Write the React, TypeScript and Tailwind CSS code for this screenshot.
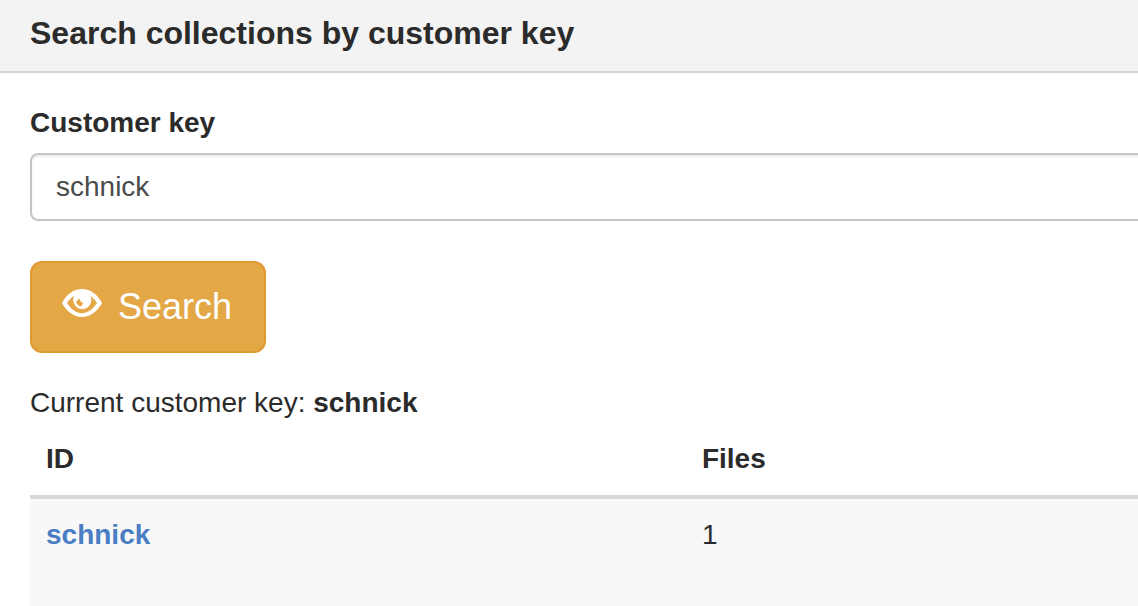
import { useState } from "react";
import type { FormEvent } from "react";

type Collection = { id: string; files: number };

const collections: Collection[] = [{ id: "schnick", files: 1 }];

function EyeIcon() {
  return (
    <svg viewBox="0 0 40 28" className="mb-2 h-7 w-10 shrink-0" fill="currentColor" aria-hidden="true">
      <path
        fillRule="evenodd"
        d="M0.3 14.8Q0 14 0.3 13.2C5 5.400 11.500 0 20 0S35 5.400 39.700 13.200Q40 14 39.700 14.800C35 22.600 28.500 28 20 28S5 22.600 0.300 14.800ZM5 14C9.500 20.600 14.500 24.200 20 24.200S30.500 20.600 35 14C33 11 30.800 8.600 28.600 7Q29.400 8.800 29.400 11A9.100 9.100 0 0 1 11.200 11Q11.200 8.800 12 7C9.400 8.600 7 11 5 14ZM14 12.600L17.600 9.400Q17.800 12.600 21.400 14.200L18.800 17.600Q15.200 16.800 14 12.600Z"
      />
    </svg>
  );
}

export default function App() {
  const [query, setQuery] = useState("schnick");
  const [customerKey, setCustomerKey] = useState("schnick");

  const search = (event: FormEvent) => {
    event.preventDefault();
    setCustomerKey(query);
  };

  return (
    <div className="min-h-screen overflow-hidden bg-white font-['Liberation_Sans',Arial,sans-serif] text-[28px] leading-10 text-[#2b2b2b]">
      <header className="border-b-2 border-[#d6d6d6] bg-[#f3f3f3] px-[30px] pt-[15px] pb-5">
        <h1 className="text-[32px] leading-9 font-bold">Search collections by customer key</h1>
      </header>
      <main className="pt-[30px] pl-[30px]">
        <form onSubmit={search}>
          <label htmlFor="customer-key" className="mb-[10px] block font-bold">
            Customer key
          </label>
          <input
            id="customer-key"
            type="text"
            value={query}
            onChange={(event) => setQuery(event.target.value)}
            className="mb-10 block h-[68px] w-[calc(100%+16px)] rounded-lg border-2 border-[#c4c4c4] bg-white px-6 text-[#4b4b4b] shadow-[inset_0_2px_2px_rgba(0,0,0,0.075)] outline-none"
          />
          <button
            type="submit"
            className="flex items-center gap-4 rounded-xl border-2 border-[#df9a30] bg-[#e3a746] py-5 pr-8 pl-[30px] text-4xl leading-12 text-white"
          >
            <EyeIcon />
            Search
          </button>
        </form>
        <p className="pt-[30px]">
          Current customer key: <strong>{customerKey}</strong>
        </p>
        <table className="w-full table-fixed border-collapse text-left">
          <thead>
            <tr>
              <th scope="col" className="w-[59.2%] p-4">ID</th>
              <th scope="col" className="p-4">Files</th>
            </tr>
          </thead>
          <tbody className="border-t-4 border-[#d8d8d8]">
            {collections.map(({ id, files }) => (
              <tr key={id} className="bg-[#f8f8f8] align-top">
                <td className="px-4 pt-4 pb-14">
                  <a href="#collection" className="font-bold text-[#4a7dc4]">{id}</a>
                </td>
                <td className="px-4 pt-4 pb-14">{files}</td>
              </tr>
            ))}
          </tbody>
        </table>
      </main>
    </div>
  );
}
